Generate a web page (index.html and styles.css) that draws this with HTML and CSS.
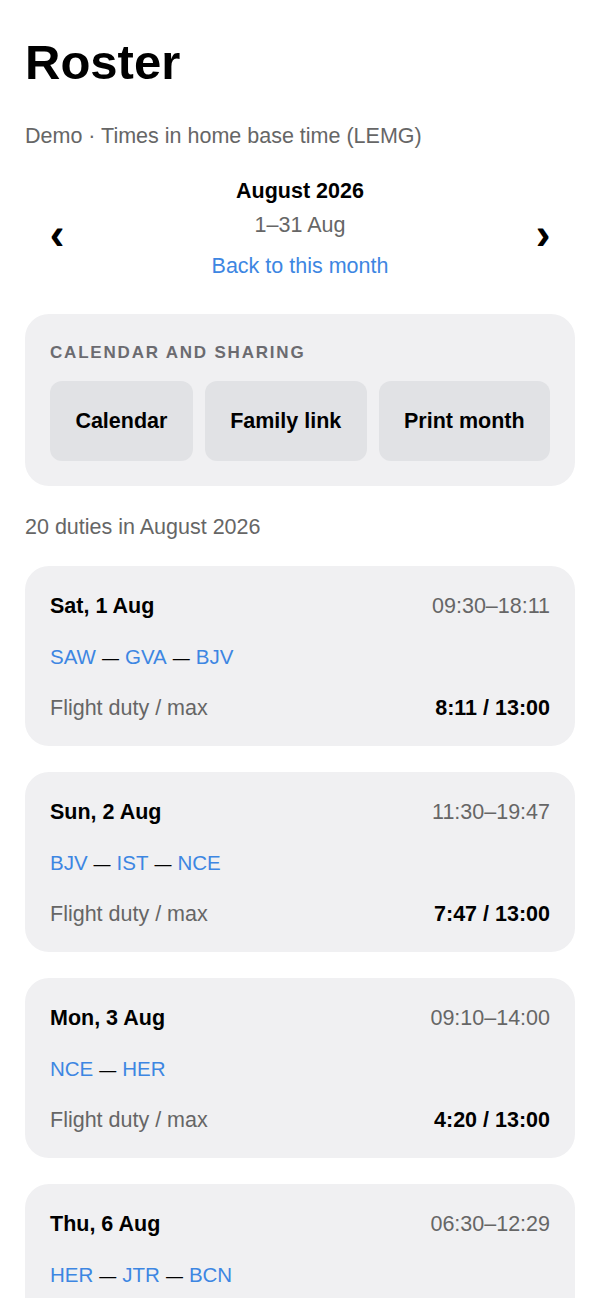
FILE: index.html
```html
<!DOCTYPE html>
<html lang="en">
<head>
    <meta charset="UTF-8">
    <meta name="viewport" content="width=device-width, initial-scale=1.0">
    <title>Roster</title>
    <link rel="stylesheet" href="styles.css">
</head>
<body>
    <div class="page">
        <h1 class="title">Roster</h1>
        <p class="subtitle">Demo · Times in home base time (LEMG)</p>

        <div class="month-nav">
            <button class="nav-arrow">‹</button>
            <div class="month-info">
                <div class="month-name">August 2026</div>
                <div class="month-range">1–31 Aug</div>
                <a class="month-reset" href="#">Back to this month</a>
            </div>
            <button class="nav-arrow">›</button>
        </div>

        <section class="share-card">
            <div class="share-label">Calendar and sharing</div>
            <div class="share-buttons">
                <button class="share-btn">Calendar</button>
                <button class="share-btn">Family link</button>
                <button class="share-btn">Print month</button>
            </div>
        </section>

        <p class="duty-count">20 duties in August 2026</p>

        <div class="duty-list">
            <div class="duty">
                <div class="duty-row">
                    <span class="duty-date">Sat, 1 Aug</span>
                    <span class="duty-time">09:30–18:11</span>
                </div>
                <div class="duty-route"><a href="#">SAW</a><span class="sep">—</span><a href="#">GVA</a><span class="sep">—</span><a href="#">BJV</a></div>
                <div class="duty-row">
                    <span class="duty-label">Flight duty / max</span>
                    <span class="duty-value">8:11 / 13:00</span>
                </div>
            </div>

            <div class="duty">
                <div class="duty-row">
                    <span class="duty-date">Sun, 2 Aug</span>
                    <span class="duty-time">11:30–19:47</span>
                </div>
                <div class="duty-route"><a href="#">BJV</a><span class="sep">—</span><a href="#">IST</a><span class="sep">—</span><a href="#">NCE</a></div>
                <div class="duty-row">
                    <span class="duty-label">Flight duty / max</span>
                    <span class="duty-value">7:47 / 13:00</span>
                </div>
            </div>

            <div class="duty">
                <div class="duty-row">
                    <span class="duty-date">Mon, 3 Aug</span>
                    <span class="duty-time">09:10–14:00</span>
                </div>
                <div class="duty-route"><a href="#">NCE</a><span class="sep">—</span><a href="#">HER</a></div>
                <div class="duty-row">
                    <span class="duty-label">Flight duty / max</span>
                    <span class="duty-value">4:20 / 13:00</span>
                </div>
            </div>

            <div class="duty">
                <div class="duty-row">
                    <span class="duty-date">Thu, 6 Aug</span>
                    <span class="duty-time">06:30–12:29</span>
                </div>
                <div class="duty-route"><a href="#">HER</a><span class="sep">—</span><a href="#">JTR</a><span class="sep">—</span><a href="#">BCN</a></div>
                <div class="duty-row">
                    <span class="duty-label">Flight duty / max</span>
                    <span class="duty-value">5:59 / 13:00</span>
                </div>
            </div>
        </div>
    </div>
</body>
</html>
```

FILE: styles.css
```css
body {
    font-family: "Liberation Sans", Arial, sans-serif;
    background-color: #fff;
    color: #000;
    margin: 0;
}
.page {
    padding: 33px 25px 40px;
}
.title {
    font-size: 49px;
    line-height: 58px;
    font-weight: bold;
    margin: 0;
}
.subtitle {
    font-size: 21.5px;
    line-height: 24px;
    color: #666;
    margin: 33px 0 0;
}
.month-nav {
    display: flex;
    align-items: center;
    margin-top: 31px;
}
.nav-arrow {
    width: 64px;
    padding: 0;
    border: none;
    background: none;
    font-family: inherit;
    font-size: 44px;
    font-weight: bold;
    line-height: 44px;
    margin-top: 10px;
    color: #000;
    cursor: pointer;
}
.month-info {
    flex: 1;
    display: flex;
    flex-direction: column;
    align-items: center;
    font-size: 21.5px;
    line-height: 24px;
}
.month-name {
    font-weight: bold;
}
.month-range {
    color: #666;
    margin-top: 10px;
}
.month-reset {
    color: #3d86e2;
    text-decoration: none;
    margin-top: 17px;
}
.share-card {
    background-color: #f0f0f2;
    border-radius: 24px;
    padding: 29px 25px 25px;
    margin-top: 36px;
}
.share-label {
    font-size: 17px;
    line-height: 20px;
    font-weight: bold;
    letter-spacing: 1.8px;
    text-transform: uppercase;
    color: #6b6b70;
}
.share-buttons {
    display: flex;
    gap: 12px;
    margin-top: 18px;
}
.share-btn {
    flex: 1 1 auto;
    height: 80px;
    padding: 0 20px;
    border: none;
    border-radius: 12px;
    background-color: #e1e2e5;
    font-family: inherit;
    font-size: 21.5px;
    font-weight: bold;
    color: #000;
    cursor: pointer;
}
.duty-count {
    font-size: 21.5px;
    line-height: 24px;
    color: #666;
    margin: 29px 0 0;
}
.duty-list {
    display: flex;
    flex-direction: column;
    gap: 26px;
    margin-top: 27px;
}
.duty {
    background-color: #f0f0f2;
    border-radius: 24px;
    padding: 28px 25px 26px;
    display: flex;
    flex-direction: column;
    gap: 27px;
    font-size: 21.5px;
    line-height: 24px;
}
.duty-row {
    display: flex;
    justify-content: space-between;
}
.duty-date, .duty-value {
    font-weight: bold;
}
.duty-time, .duty-label {
    color: #666;
}
.duty-route {
    font-size: 20.5px;
    height: 24px;
}
.duty-route a {
    color: #3d86e2;
    text-decoration: none;
}
.sep {
    font-size: 17px;
    line-height: 0;
    margin: 0 6px;
}
```
